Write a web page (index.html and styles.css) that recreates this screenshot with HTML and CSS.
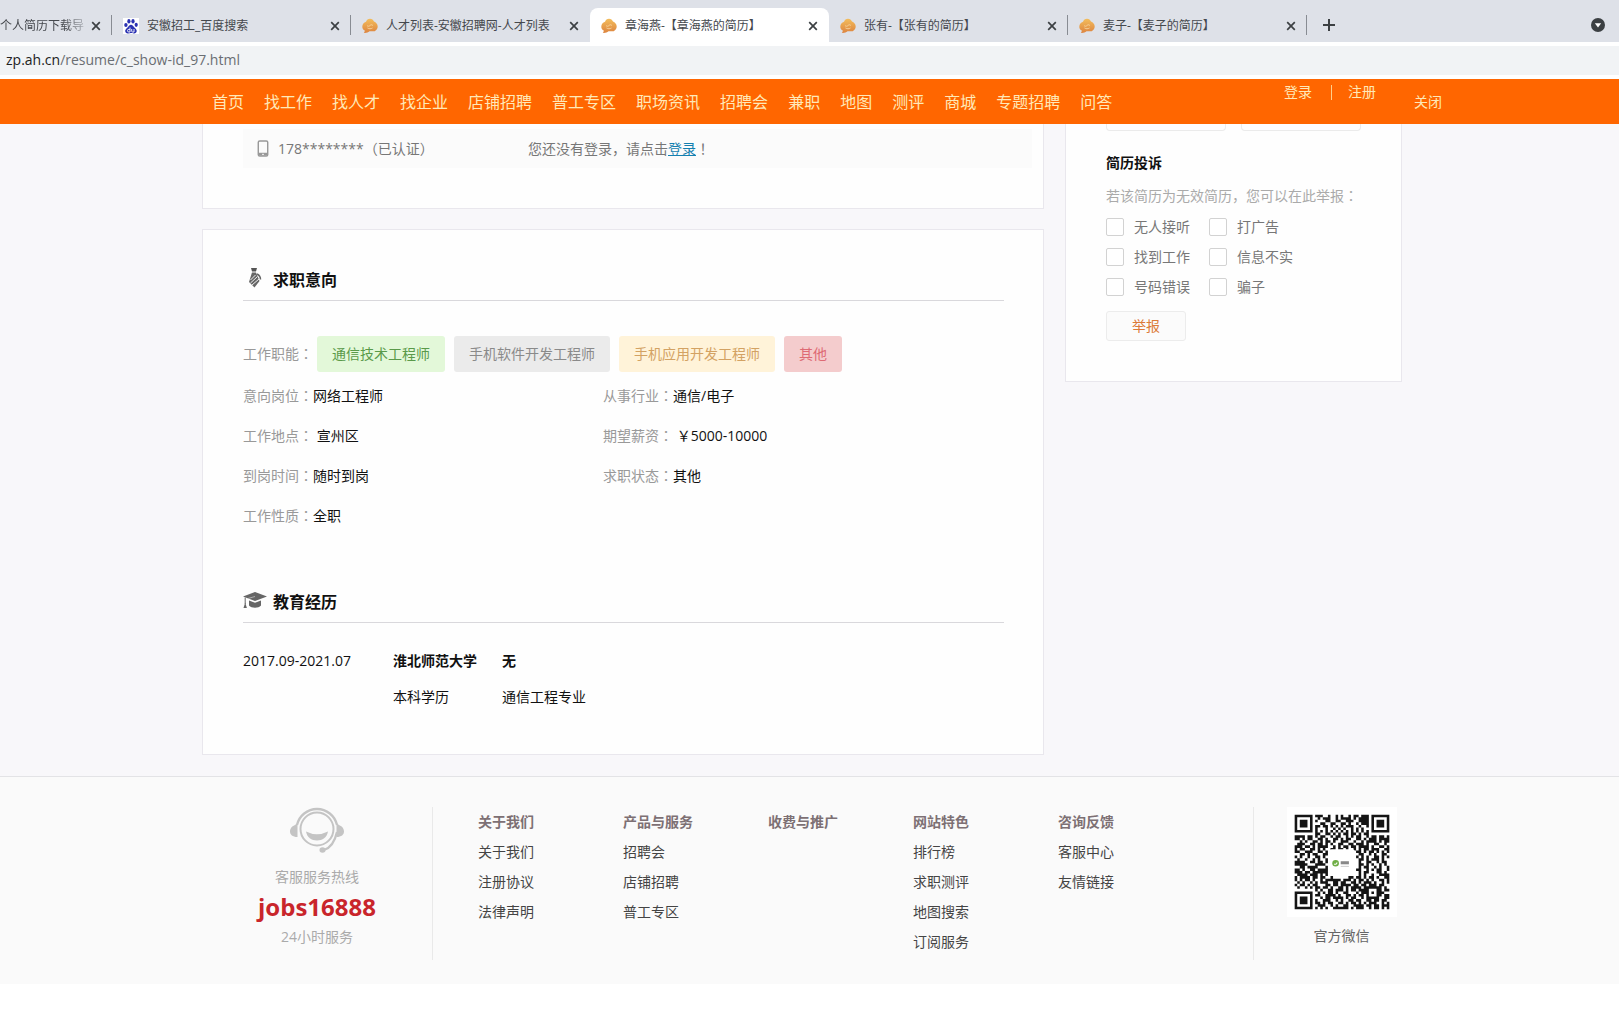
FILE: index.html
```html
<!DOCTYPE html>
<html lang="zh-CN">
<head>
<meta charset="utf-8">
<meta name="viewport" content="width=device-width, initial-scale=1">
<title>章海燕-【章海燕的简历】</title>
<link rel="stylesheet" href="styles.css">
</head>
<body>
<svg class="defs" width="0" height="0" aria-hidden="true">
  <defs>
    <linearGradient id="amber" x1="0" y1="0" x2="0" y2="1">
      <stop offset="0" stop-color="#f3bd5c"/><stop offset="1" stop-color="#dd8540"/>
    </linearGradient>
    <symbol id="i-bubble" viewBox="0 0 16 16">
      <path d="M8 .8c2 0 3.3 1.2 4 2.8 2 .8 3.700 2.600 3.700 5 0 2-1.200 3.800-3 4.600H7.500c-1.500 1.300-3.500 1.900-5.700 1.600.7-.6 1-1.300 1-2.200C1.200 11.700.3 10.300.3 8.700c0-2.400 1.600-4.300 3.700-5C4.700 2 6 .8 8 .8z" fill="url(#amber)"/>
      <path d="M5 7.500c1 1 2 1 3 0s2-1 3 .2M5.500 10c1.500 1 3.500 1 5 0" fill="none" stroke="#f9dca8" stroke-width=".8"/>
    </symbol>
    <symbol id="i-close" viewBox="0 0 10 10"><path d="M1.200 1.200l7.600 7.600M8.800 1.200L1.200 8.800" stroke="#3c4043" stroke-width="1.700"/></symbol>
  </defs>
</svg>

<div class="browser">
  <div class="tabs">
    <div class="tab tab-first">
      <button class="tab-title">个人简历下载导</button>
      <button class="tab-close" aria-label="关闭标签页"><svg><use href="#i-close"/></svg></button>
    </div>
    <div class="tab">
      <svg class="favicon" viewBox="0 0 16 16"><rect width="16" height="16" fill="#fff"/><g fill="#2b32b2"><ellipse cx="2.900" cy="7" rx="1.700" ry="2.100"/><ellipse cx="5.900" cy="3.200" rx="1.600" ry="2.200"/><ellipse cx="10" cy="3.200" rx="1.600" ry="2.200"/><ellipse cx="13.200" cy="6.800" rx="1.600" ry="2.100"/><path d="M8 6.800c1.600 0 2.300 1.600 3.400 2.600 1.300 1.100 2.300 2.100 2.300 3.600 0 1.800-1.400 2.500-2.900 2.400-1.200-.1-1.800-.3-2.800-.3s-1.700.3-2.900.3c-1.600.1-2.900-.7-2.900-2.400 0-1.500 1.100-2.400 2.400-3.600C5.700 8.400 6.400 6.800 8 6.800z"/></g><path d="M7 9.500V14H5.800a1.300 1.300 0 010-2.600H7M8.700 11v2.200q0 .8.800.8H11v-3" fill="none" stroke="#fff" stroke-width=".9"/></svg>
      <button class="tab-title">安徽招工_百度搜索</button>
      <button class="tab-close" aria-label="关闭标签页"><svg><use href="#i-close"/></svg></button>
    </div>
    <div class="tab before-active">
      <svg class="favicon"><use href="#i-bubble"/></svg>
      <button class="tab-title">人才列表-安徽招聘网-人才列表</button>
      <button class="tab-close" aria-label="关闭标签页"><svg><use href="#i-close"/></svg></button>
    </div>
    <div class="tab active">
      <svg class="favicon"><use href="#i-bubble"/></svg>
      <button class="tab-title">章海燕-【章海燕的简历】</button>
      <button class="tab-close" aria-label="关闭标签页"><svg><use href="#i-close"/></svg></button>
    </div>
    <div class="tab">
      <svg class="favicon"><use href="#i-bubble"/></svg>
      <button class="tab-title">张有-【张有的简历】</button>
      <button class="tab-close" aria-label="关闭标签页"><svg><use href="#i-close"/></svg></button>
    </div>
    <div class="tab">
      <svg class="favicon"><use href="#i-bubble"/></svg>
      <button class="tab-title">麦子-【麦子的简历】</button>
      <button class="tab-close" aria-label="关闭标签页"><svg><use href="#i-close"/></svg></button>
    </div>
    <button class="tab-new" aria-label="新标签页"><svg viewBox="0 0 12 12"><path d="M6 0v12M0 6h12" stroke="#3c4043" stroke-width="2"/></svg></button>
    <button class="tab-menu" aria-label="搜索标签页"><svg viewBox="0 0 14 14"><circle cx="7" cy="7" r="7" fill="#3c4043"/><path d="M3.800 5.200h6.400L7 9.400z" fill="#fff"/></svg></button>
  </div>
  <div class="address"><span class="host">zp.ah.cn</span>/resume/c_show-id_97.html</div>
</div>

<header class="topbar">
  <div class="wrap topbar-inner">
    <nav class="nav">
      <a href="#">首页</a><a href="#">找工作</a><a href="#">找人才</a><a href="#">找企业</a><a href="#">店铺招聘</a><a href="#">普工专区</a><a href="#">职场资讯</a><a href="#">招聘会</a><a href="#">兼职</a><a href="#">地图</a><a href="#">测评</a><a href="#">商城</a><a href="#">专题招聘</a><a href="#">问答</a>
    </nav>
    <div class="account"><a href="#">登录</a><i class="bar"></i><a href="#">注册</a></div>
    <a class="dismiss" href="#">关闭</a>
  </div>
</header>

<main class="page">
  <div class="wrap columns">
    <div class="content">
      <section class="card contact">
        <div class="contact-bar">
          <svg class="phone" viewBox="0 0 12 18"><rect x="1" y="1" width="10" height="16" rx="1.500" fill="none" stroke="#999" stroke-width="1.500"/><path d="M1 13.500h10v3H1z" fill="#999"/><path d="M5 15.200h2" stroke="#fff"/></svg>
          <span class="number">178********<span class="mark" lang="zh-Hant">（</span>已认证<span class="mark" lang="zh-Hant">）</span></span>
          <span>您还没有登录，请点击<a href="#">登录</a><span class="mark" lang="zh-Hant">！</span></span>
        </div>
      </section>

      <section class="card resume">
        <h2 class="heading">
          <svg class="heading-icon" viewBox="0 0 24 20"><path d="M8 0h6l-1 3.500H9z" fill="#555"/><path d="M9 4.500h4l3.500 8.500-5 6.500L6 14z" fill="#666"/><path d="M7.500 12l5-5M7.500 15l7-6.500M9 17l7-6" stroke="#fff" stroke-width=".9"/><path d="M14 6c2 1 3.500 3 3.500 5.500" fill="none" stroke="#666" stroke-width="1.500"/></svg>
          求职意向
        </h2>
        <div class="tags">
          <span class="label">工作职能<span class="mark" lang="zh-Hant">：</span></span>
          <span class="tag green">通信技术工程师</span>
          <span class="tag gray">手机软件开发工程师</span>
          <span class="tag yellow">手机应用开发工程师</span>
          <span class="tag red">其他</span>
        </div>
        <ul class="facts">
          <li><span class="label">意向岗位<span class="mark" lang="zh-Hant">：</span></span>网络工程师</li>
          <li><span class="label">从事行业<span class="mark" lang="zh-Hant">：</span></span>通信/电子</li>
          <li><span class="label">工作地点<span class="mark" lang="zh-Hant">：</span></span> 宣州区</li>
          <li><span class="label">期望薪资<span class="mark" lang="zh-Hant">：</span></span> ￥5000-10000</li>
          <li><span class="label">到岗时间<span class="mark" lang="zh-Hant">：</span></span>随时到岗</li>
          <li><span class="label">求职状态<span class="mark" lang="zh-Hant">：</span></span>其他</li>
          <li><span class="label">工作性质<span class="mark" lang="zh-Hant">：</span></span>全职</li>
        </ul>

        <h2 class="heading">
          <svg class="heading-icon" viewBox="0 0 24 20"><path d="M12 2l12 4.500-12 4.500L0 6.500z" fill="#666"/><path d="M6 10.500l6 2.200 6-2.200v5c-2.500 3-9.500 3-12 0z" fill="#666"/><path d="M5 8.500l7-2" stroke="#ccc" stroke-width=".7"/><path d="M2.200 7.500V14" stroke="#666"/><path d="M2.200 12.500l1.700 5.500H.5z" fill="#666"/></svg>
          教育经历
        </h2>
        <div class="education">
          <span>2017.09-2021.07</span><b>淮北师范大学</b><b>无</b>
          <span class="degree">本科学历</span><span>通信工程专业</span>
        </div>
      </section>
    </div>

    <aside class="card sidebar">
      <div class="stubs"><div class="stub"></div><div class="stub"></div></div>
      <h3>简历投诉</h3>
      <p class="hint">若该简历为无效简历，您可以在此举报<span class="mark" lang="zh-Hant">：</span></p>
      <form class="report">
        <div class="reasons">
          <label><input type="checkbox">无人接听</label>
          <label><input type="checkbox">打广告</label>
          <label><input type="checkbox">找到工作</label>
          <label><input type="checkbox">信息不实</label>
          <label><input type="checkbox">号码错误</label>
          <label><input type="checkbox">骗子</label>
        </div>
        <button class="submit" type="button">举报</button>
      </form>
    </aside>
  </div>
</main>

<footer class="footer">
  <div class="wrap footer-inner">
    <div class="support">
      <svg viewBox="0 0 54 46"><g fill="none" stroke="#c4c4c4"><circle cx="27" cy="22" r="16.500" stroke-width="2"/><path d="M7 18a20.500 20.500 0 0140 0M47 25c-2 9-7 16-13 18" stroke-width="2.300"/></g><path d="M7.500 16v14C2.500 30 0 27.500 0 24.500 0 21 2.500 19 5 18zM46.500 16v14c5 0 7.500-2.500 7.500-5.500 0-3.500-2.500-5.500-5-6.500z" fill="#c4c4c4"/><path d="M16 24.500q11 5.500 22 0c-1 6-5.500 9-11 9s-10-3-11-9z" fill="#c4c4c4"/><ellipse cx="32.500" cy="43" rx="3" ry="2.700" fill="#c4c4c4"/></svg>
      <p>客服服务热线</p>
      <strong>jobs16888</strong>
      <p>24小时服务</p>
    </div>
    <div class="links">
      <ul><li><b>关于我们</b></li><li><a href="#">关于我们</a></li><li><a href="#">注册协议</a></li><li><a href="#">法律声明</a></li></ul>
      <ul><li><b>产品与服务</b></li><li><a href="#">招聘会</a></li><li><a href="#">店铺招聘</a></li><li><a href="#">普工专区</a></li></ul>
      <ul><li><b>收费与推广</b></li></ul>
      <ul><li><b>网站特色</b></li><li><a href="#">排行榜</a></li><li><a href="#">求职测评</a></li><li><a href="#">地图搜索</a></li><li><a href="#">订阅服务</a></li></ul>
      <ul><li><b>咨询反馈</b></li><li><a href="#">客服中心</a></li><li><a href="#">友情链接</a></li></ul>
    </div>
    <div class="wechat">
      <svg id="qr" class="qr" viewBox="-3 -3 43 43" role="img" aria-label="官方微信二维码"></svg>
      <p>官方微信</p>
    </div>
  </div>
</footer>
<script src="qr.js"></script>
</body>
</html>
```
FILE: styles.css
```css
* { box-sizing: border-box; }

body {
  margin: 0;
  background: #fff;
  color: #111;
  font: 14px/20px "Open Sans", "Noto Sans CJK SC", sans-serif;
}

h2, h3, p, ul { margin: 0; padding: 0; }
ul { list-style: none; }
a { color: inherit; text-decoration: none; }
button { margin: 0; padding: 0; border: 0; background: none; font: inherit; color: inherit; }
svg { display: block; }
.defs { position: absolute; }

/* Full-width punctuation centred in its em box */
.mark { font-family: "Noto Sans CJK TC", sans-serif; line-height: 1; }

/* Browser chrome */
.tabs {
  display: flex;
  height: 42px;
  padding-top: 8px;
  background: #dee1e8;
  overflow: hidden;
}
.tab {
  flex: 0 1 239px;
  display: flex;
  align-items: center;
  min-width: 0;
  padding: 1px 11px 0;
  background: linear-gradient(#888c93, #888c93) right center / 1px 20px no-repeat;
  font-size: 12px;
  color: #45484d;
}
.tab-first { flex-basis: 112px; padding-left: 0; }
.tab-first .tab-title { margin-right: 6px; mask-image: linear-gradient(90deg, #000 75%, #0004); }
.before-active { background: none; }
.tab.active { background: #fff; border-radius: 8px 8px 0 0; }
.favicon { flex: none; width: 16px; height: 16px; margin-right: 8px; }
.tab-title { flex: 1; min-width: 0; overflow: hidden; white-space: nowrap; text-align: left; }
.tab-close { flex: none; width: 10px; height: 10px; }
.tab-close svg { width: 10px; height: 10px; }
.tab-new { width: 12px; margin-left: 16px; }
.tab-menu { width: 14px; margin: 0 14px 0 auto; }
.address {
  height: 37px;
  padding-left: 6px;
  border: solid #fff;
  border-width: 4px 0;
  background: #f1f3f5;
  line-height: 27px;
  font-size: 14px;
  color: #6a6e73;
}
.host { color: #222; }

/* Site layout */
.wrap { max-width: 1200px; margin: 0 auto; }
.topbar, .page, .footer { padding-right: 15px; }

.topbar { background: #f60; color: #ffe9b8; }
.topbar-inner { display: flex; height: 45px; padding-left: 10px; line-height: 46px; }
.nav { display: flex; gap: 20px; flex: 1; font-size: 16px; white-space: nowrap; }
.account { display: flex; align-items: center; align-self: flex-start; height: 26px; margin-right: 26px; }
.bar { width: 1px; height: 15px; margin: 0 16px 0 19px; background: #ffd08a; }
/* The dismiss link hangs past the right edge of the centred column. */
.dismiss { margin: 0 -40px 0 12px; }

.page { padding-bottom: 21px; background: #f8f7fa; }
.columns { display: flex; align-items: flex-start; gap: 21px; }
.content { flex: 1; display: flex; flex-direction: column; gap: 20px; }
.card { background: #fefefe; border: 1px solid #e9e7ed; }

.contact { padding: 5px 11px 40px 40px; border-top: 0; }
.contact-bar { display: flex; align-items: center; height: 39px; padding-left: 14px; background: #fbfbfb; color: #777; }
.phone { width: 12px; height: 17px; margin-right: 9px; }
.number { width: 250px; }
.contact-bar a { color: #1480b0; text-decoration: underline; }

.resume { padding: 32px 39px 39px 40px; }
.heading {
  display: flex;
  align-items: center;
  gap: 6px;
  height: 39px;
  padding-bottom: 2px;
  border-bottom: 1px solid #d9d8dc;
  font-size: 16px;
  font-weight: 700;
  color: #111;
}
.heading-icon { width: 24px; height: 20px; margin-bottom: 4px; }
.label { color: #999; }
.tags { display: flex; align-items: center; gap: 9px; margin-top: 35px; }
.tags .label { margin-right: -5px; }
.tag { padding: 8px 15px; border-radius: 3px; }
.green { background: #e3f8d9; color: #5a9a4a; }
.gray { background: #ebebeb; color: #8a8a8a; }
.yellow { background: #fff3d9; color: #d3a263; }
.red { background: #f4cccd; color: #de6a74; }
.facts { display: grid; grid-template-columns: 360px 360px; margin: 4px 0 48px; line-height: 40px; }
.education {
  display: grid;
  grid-template-columns: 150px 109px auto;
  justify-content: start;
  margin-top: 20px;
  line-height: 36px;
}
.degree { grid-column: 2; }

.sidebar { width: 337px; padding: 0 39px 40px 40px; border-top: 0; }
.stubs { display: flex; gap: 15px; }
.stub { width: 120px; height: 7px; border: 1px solid #ebebeb; border-top: 0; border-radius: 0 0 4px 4px; }
.sidebar h3 { margin-top: 22px; font-size: 14px; }
.hint { margin: 13px 0 6px; color: #aaa; white-space: nowrap; }
.reasons { display: grid; grid-template-columns: 103px auto; }
.reasons label { display: flex; align-items: center; gap: 10px; height: 30px; color: #777; }
.reasons input { appearance: none; width: 18px; height: 18px; margin: 0; border: 1px solid #d2d2d2; border-radius: 2px; background: #fff; }
.submit { width: 80px; height: 30px; margin-top: 9px; border: 1px solid #ececec; border-radius: 3px; background: #fbfbfb; color: #dc7a38; }

.footer { padding-top: 30px; padding-bottom: 24px; border-top: 1px solid #e3e3e6; background: #fafafa; }
.footer-inner { display: flex; min-height: 153px; }
.support { width: 231px; border-right: 1px solid #e9e9e9; text-align: center; color: #aaa; }
.support svg { width: 54px; height: 46px; margin: 0 auto 14px; }
.support strong { display: block; line-height: 40px; font-size: 24px; color: #c9252b; }
.links { flex: 1; display: flex; padding-left: 45px; line-height: 30px; color: #444; }
.links ul { width: 145px; }
.links b { color: #7d7074; }
.wechat { width: 149px; padding: 0 6px 0 33px; border-left: 1px solid #e9e9e9; text-align: center; color: #666; }
.qr { width: 110px; height: 110px; margin-bottom: 9px; background: #fff; }
```
FILE: qr.js
```js
// One string per row of the QR symbol; "#" is a dark module.
const rows = [
  "#######.###..#..#.#..#.##.###.#######",
  "#.....#..#.###..#.####.#.####.#.....#",
  "#.###.#.#...##..##..###..####.#.###.#",
  "#.###.#...##..##..##.#..#.###.#.###.#",
  "#.###.#.##.##.#.#.#.###..#..#.#.###.#",
  "#.....#.#...#..#.#.#..#.#.#...#.....#",
  "#######.#.#.#.#.#.#.#.#.#.#.#.#######",
  "........##..##.#.#.##.##.#.##........",
  "####.##.#.##..#.##..#.#.##..#.##.##.#",
  "..#.#..##.#.##.#..###..#..#.####.#.##",
  ".###..##.##.#.#..##..##.###.#..##..#.",
  "###.##.#.####..#.#.##.##.####.#..##.#",
  "#.##..##.#.#..##.##.#..#.#.##.###..##",
  "##..###..##.#.##.....#..##.#.##.#.#.#",
  "..##.#.##..##............##..#.#..##.",
  "#.#..#..##.#............#.#.#..##.#.#",
  ".#..#..#.#..#............##.#.###.#..",
  "####..##.##.#............#..##..#.##.",
  "#####...####.............##.#.#..#.#.",
  "..##.####...#............#.##..#.#..#",
  "##.#..##.####...........##..#.#.##..#",
  "###.##.######............#.##...##.#.",
  ".####.###.#.#............#.#..#..####",
  "#.####.##.##..#......##.##.#.##.#..##",
  "#.#.##.#..#.######.###.#.##.#.#..##.#",
  ".#.#..#.#.###..##.##..##.#.###.#..#.#",
  "#.##.#.##...##.##.####.##.##.###.##..",
  ".#..#.#.##.##.#..##.#.####.#######.#.",
  "........#.#..##.###.#.##.####...##.##",
  "#######..#.#.##.#..##...#.###.#.###..",
  "#.....#.##..####.#..##.#.##.#...##.##",
  "#.###.#...#.##.####.#.##..#.#####..##",
  "#.###.#.#..###..#.#..##.##..##.##.##.",
  "#.###.#.##.#.##..##.#.##.#.#.###..#.#",
  "#.....#..###..#.#..##..####.##.##.###",
  "#######.#.#.#..######.#.###..#.##.#.#"
];
rows.splice(9, 0, "##.#.##..##.#..##.#.##..##.#.###.####");

const runs = rows.map((row, y) =>
  [...row.matchAll(/#+/g)].map(m => `M${m.index} ${y}h${m[0].length}v1h-${m[0].length}z`).join("")
).join("");

document.getElementById("qr").innerHTML =
  `<path d="${runs}" fill="#151515"/>
   <rect x="13.500" y="13.500" width="10" height="10" rx="1" fill="#fff"/>
   <circle cx="16" cy="19" r="1.300" fill="#6fae45"/>
   <path d="M15.400 19.300q.8.400 1.200-.6" fill="none" stroke="#fff" stroke-width=".4"/>
   <path d="M18 18.200h3.200v1.200H18z" fill="#888"/>
   <path d="M18 20.200h3.200" stroke="#bbb" stroke-width=".3"/>`;
```
